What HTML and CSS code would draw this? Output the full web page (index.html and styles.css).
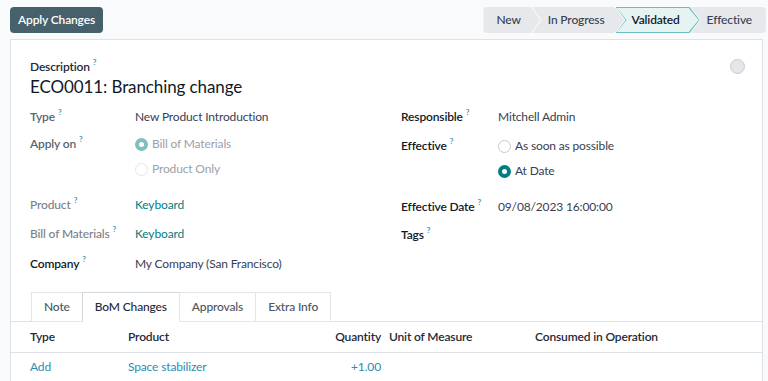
FILE: index.html
```html
<!DOCTYPE html>
<html lang="en">

<head>
    <meta charset="UTF-8">
    <meta name="viewport" content="width=device-width, initial-scale=1.0">
    <title>ECO0011: Branching change</title>
    <link rel="stylesheet" href="styles.css">
</head>

<body>

    <div class="control-panel">
        <button class="btn-apply">Apply Changes</button>
        <div class="statusbar">
            <span class="stage first">New</span>
            <span class="stage">In Progress</span>
            <span class="stage active">Validated</span>
            <span class="stage last">Effective</span>
        </div>
    </div>

    <section class="sheet">
        <div class="sheet-head">
            <div>
                <div class="desc-label">Description<sup class="tip">?</sup></div>
                <h1 class="title">ECO0011: Branching change</h1>
            </div>
            <span class="kanban-dot"></span>
        </div>

        <div class="groups">
            <div class="group group-left">
                <div class="field h27">
                    <label class="lbl muted">Type<sup class="tip">?</sup></label>
                    <span class="val">New Product Introduction</span>
                </div>
                <div class="field h61">
                    <label class="lbl muted">Apply on<sup class="tip">?</sup></label>
                    <div class="radios">
                        <span class="radio disabled checked">Bill of Materials</span>
                        <span class="radio disabled">Product Only</span>
                    </div>
                </div>
                <div class="field h29">
                    <label class="lbl light">Product<sup class="tip">?</sup></label>
                    <a class="val link">Keyboard</a>
                </div>
                <div class="field h30">
                    <label class="lbl light">Bill of Materials<sup class="tip">?</sup></label>
                    <a class="val link">Keyboard</a>
                </div>
                <div class="field h27">
                    <label class="lbl">Company<sup class="tip">?</sup></label>
                    <span class="val">My Company (San Francisco)</span>
                </div>
            </div>

            <div class="group group-right">
                <div class="field h29">
                    <label class="lbl">Responsible<sup class="tip">?</sup></label>
                    <span class="val">Mitchell Admin</span>
                </div>
                <div class="field h61">
                    <label class="lbl">Effective<sup class="tip">?</sup></label>
                    <div class="radios">
                        <span class="radio">As soon as possible</span>
                        <span class="radio checked">At Date</span>
                    </div>
                </div>
                <div class="field h28">
                    <label class="lbl">Effective Date<sup class="tip">?</sup></label>
                    <span class="val">09/08/2023 16:00:00</span>
                </div>
                <div class="field h27">
                    <label class="lbl">Tags<sup class="tip">?</sup></label>
                    <span class="val"></span>
                </div>
            </div>
        </div>

        <div class="notebook">
            <span class="tab">Note</span>
            <span class="tab active">BoM Changes</span>
            <span class="tab">Approvals</span>
            <span class="tab">Extra Info</span>
        </div>

        <table class="lines">
            <colgroup>
                <col class="c-type">
                <col class="c-product">
                <col class="c-qty">
                <col class="c-uom">
                <col>
            </colgroup>
            <thead>
                <tr>
                    <th>Type</th>
                    <th>Product</th>
                    <th class="num">Quantity</th>
                    <th>Unit of Measure</th>
                    <th>Consumed in Operation</th>
                </tr>
            </thead>
            <tbody>
                <tr>
                    <td class="info">Add</td>
                    <td class="info">Space stabilizer</td>
                    <td class="info num">+1.00</td>
                    <td></td>
                    <td></td>
                </tr>
            </tbody>
        </table>
    </section>

</body>

</html>
```

FILE: styles.css
```css
*,
*::before,
*::after {
    margin: 0;
    padding: 0;
    box-sizing: border-box;
}

body {
    background: #f9fafb;
    font-family: Lato, "Noto Sans", sans-serif;
    font-size: 12px;
    letter-spacing: -0.15px;
    line-height: 18px;
    color: #374151;
    overflow: hidden;
}

/* top bar: button + status */
.control-panel {
    display: flex;
    justify-content: space-between;
    align-items: center;
    padding: 7px 2px 6px 10px;
}

.btn-apply {
    height: 26px;
    width: 93px;
    border: none;
    border-radius: 4px;
    background: #46616c;
    color: #fff;
    font: inherit;
    letter-spacing: inherit;
    font-weight: 600;
}

.statusbar {
    display: flex;
    height: 26px;
    background: #fff;
    border-radius: 4px;
}

.stage {
    display: flex;
    align-items: center;
    height: 26px;
    padding: 0 20px 0 16px;
    margin-left: -9px;
    background: #e6e8eb;
    color: #374151;
    font-weight: 500;
    clip-path: polygon(0 0, calc(100% - 10px) 0, 100% 50%, calc(100% - 10px) 100%, 0 100%, 10px 50%);
}

.stage.first {
    margin-left: 0;
    padding-left: 13px;
    border-radius: 4px 0 0 4px;
    clip-path: polygon(0 0, calc(100% - 10px) 0, 100% 50%, calc(100% - 10px) 100%, 0 100%);
}

.stage.last {
    padding-right: 14px;
    border-radius: 0 4px 4px 0;
    clip-path: polygon(0 0, 100% 0, 100% 100%, 0 100%, 10px 50%);
}

.stage.active {
    position: relative;
    isolation: isolate;
    background: #6dbdc0;
    color: #111827;
    font-weight: 600;
}

.stage.active::before {
    content: '';
    position: absolute;
    inset: 1px;
    background: #e5f3f3;
    clip-path: polygon(0 0, calc(100% - 10px) 0, 100% 50%, calc(100% - 10px) 100%, 0 100%, 10px 50%);
    z-index: -1;
}

/* form sheet */
.sheet {
    margin: 0 5px 0 10px;
    padding: 18px 17px 0 19px;
    background: #fff;
    border: 1px solid #dee2e6;
    min-height: 400px;
}

.sheet-head {
    display: flex;
    justify-content: space-between;
    align-items: flex-start;
}

.desc-label {
    font-weight: 600;
    color: #1f2937;
}

.title {
    font-size: 17px;
    letter-spacing: -0.1px;
    line-height: 22px;
    font-weight: 400;
    color: #111827;
}

.kanban-dot {
    width: 15px;
    height: 15px;
    margin-top: 1px;
    border-radius: 50%;
    background: #e4e6ea;
    border: 1px solid #c8cbd0;
}

.tip {
    font-size: 8px;
    font-weight: 700;
    line-height: 1;
    vertical-align: top;
    margin-left: 3px;
    color: #3a9dc4;
}

.groups {
    display: grid;
    grid-template-columns: 371px 1fr;
    margin-top: 10px;
}

.field {
    display: grid;
    align-items: start;
}

.group-left .field {
    grid-template-columns: 105px 1fr;
}

.group-right .field {
    grid-template-columns: 97px 1fr;
}

.h27 { height: 27px; }
.h28 { height: 28px; }
.h29 { height: 29px; }
.h30 { height: 30px; }
.h61 { height: 61px; }

.lbl {
    font-weight: 600;
    color: #111827;
}

.lbl.muted {
    color: #5b6470;
}

.lbl.light {
    font-weight: 500;
    color: #7a818a;
}

.link {
    color: #017e84;
}

.radios {
    display: flex;
    flex-direction: column;
    gap: 7px;
}

.radio {
    display: flex;
    align-items: center;
    gap: 4px;
    color: #374151;
}

.radio::before {
    content: '';
    flex: none;
    width: 13px;
    height: 13px;
    border-radius: 50%;
    border: 1px solid #c5c9cf;
    background: #fff;
}

.radio.checked::before {
    border: 4px solid #017e84;
}

.radio.disabled {
    color: #9ca1a8;
}

.radio.disabled::before {
    border-color: #e3e5e8;
}

.radio.disabled.checked::before {
    border: 4px solid #7fbfc2;
}

/* notebook tabs */
.notebook {
    display: flex;
    margin: 10px -17px 0 -19px;
    padding-left: 20px;
    border-bottom: 1px solid #dee2e6;
}

.tab {
    height: 30px;
    padding: 0 12px;
    margin-right: -1px;
    margin-bottom: -1px;
    display: flex;
    align-items: center;
    border: 1px solid #e3e5e8;
    color: #4b5563;
    font-weight: 500;
}

.tab.active {
    border-color: #d4d7db;
    border-bottom-color: #fff;
    color: #1f2937;
}

/* lines table */
.lines {
    width: calc(100% + 36px);
    margin: 0 -17px 0 -19px;
    border-collapse: collapse;
    table-layout: fixed;
}

.c-type { width: 113px; }
.c-product { width: 176px; }
.c-qty { width: 85px; }
.c-uom { width: 146px; }

.lines th,
.lines td {
    height: 30px;
    padding: 0 4px;
    text-align: left;
    white-space: nowrap;
}

.lines th {
    font-weight: 600;
    color: #1f2937;
    border-bottom: 1px solid #dee2e6;
}

.lines th:first-child,
.lines td:first-child {
    padding-left: 19px;
}

.lines .num {
    text-align: right;
}

.lines .info {
    color: #2a8db2;
}
```
